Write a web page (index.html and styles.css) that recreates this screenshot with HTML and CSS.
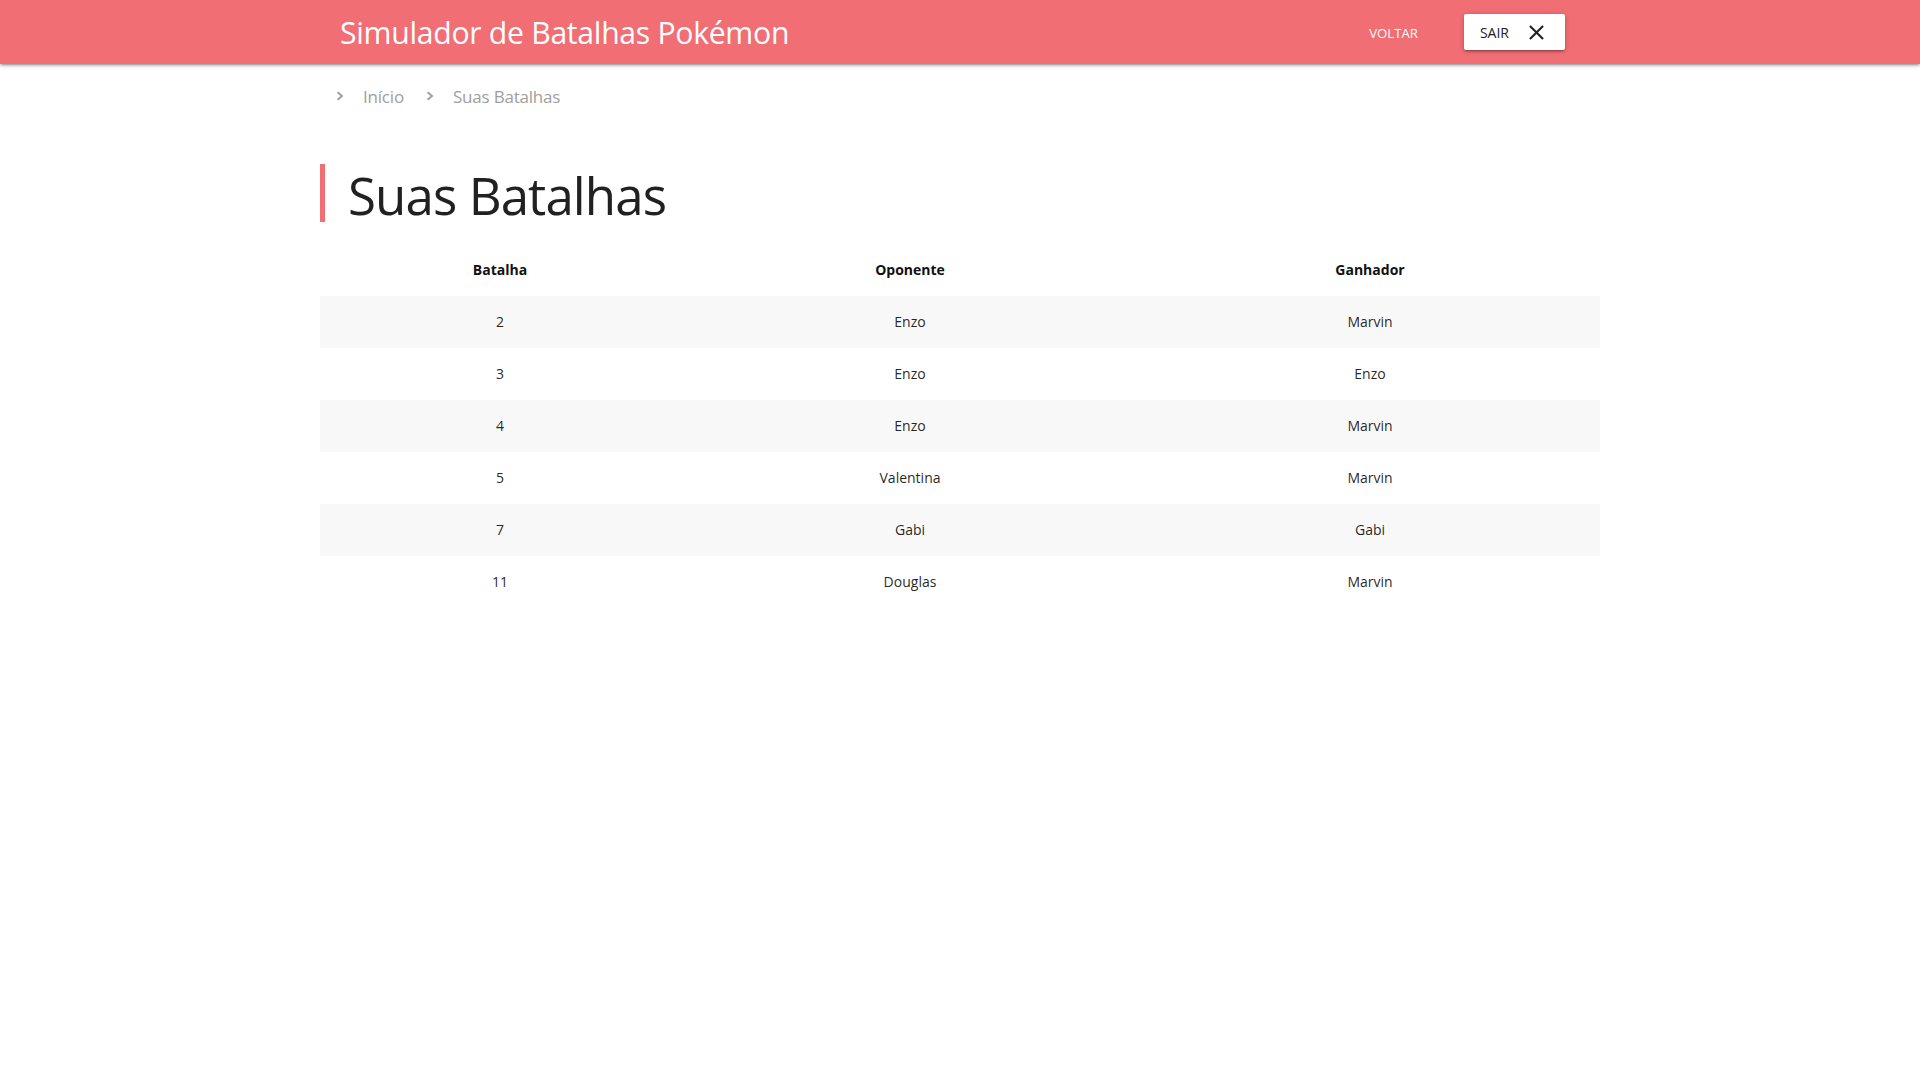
FILE: index.html
```html
<!DOCTYPE html>
<html lang="pt-BR">
<head>
<meta charset="utf-8">
<title>Suas Batalhas</title>
<link rel="stylesheet" href="styles.css">
</head>
<body>
<nav class="topbar">
  <div class="topbar-inner">
    <a class="brand" href="#">Simulador de Batalhas Pokémon</a>
    <ul class="nav-links">
      <li><a class="nav-link" href="#">VOLTAR</a></li>
      <li><a class="btn-sair" href="#">SAIR<svg class="close-icon" viewBox="0 0 24 24" width="25" height="25"><path d="M19 6.41L17.59 5 12 10.59 6.41 5 5 6.41 10.59 12 5 17.59 6.41 19 12 13.41 17.59 19 19 17.59 13.41 12z" fill="#212121"/></svg></a></li>
    </ul>
  </div>
</nav>
<main class="container">
  <div class="breadcrumbs">
    <span class="crumb"><svg class="chev" viewBox="0 0 8 10" width="8" height="10"><polyline points="1.6,1.3 5.9,5 1.6,8.7" fill="none" stroke="#9ea1a8" stroke-width="2.1"/></svg><a href="#" class="crumb-text">Início</a></span>
    <span class="crumb"><svg class="chev" viewBox="0 0 8 10" width="8" height="10"><polyline points="1.6,1.3 5.9,5 1.6,8.7" fill="none" stroke="#9ea1a8" stroke-width="2.1"/></svg><span class="crumb-text">Suas Batalhas</span></span>
  </div>
  <h1 class="page-title">Suas Batalhas</h1>
  <table class="battles">
    <colgroup>
      <col class="col-a"><col class="col-b"><col class="col-c">
    </colgroup>
    <thead>
      <tr><th>Batalha</th><th>Oponente</th><th>Ganhador</th></tr>
    </thead>
    <tbody>
      <tr><td>2</td><td>Enzo</td><td>Marvin</td></tr>
      <tr><td>3</td><td>Enzo</td><td>Enzo</td></tr>
      <tr><td>4</td><td>Enzo</td><td>Marvin</td></tr>
      <tr><td>5</td><td>Valentina</td><td>Marvin</td></tr>
      <tr><td>7</td><td>Gabi</td><td>Gabi</td></tr>
      <tr><td>11</td><td>Douglas</td><td>Marvin</td></tr>
    </tbody>
  </table>
</main>
</body>
</html>
```

FILE: styles.css
```css
html, body {
  margin: 0;
  padding: 0;
}
body {
  font-family: "Open Sans", "Noto Sans", sans-serif;
  color: rgba(0, 0, 0, 0.87);
  background: #ffffff;
}
a {
  text-decoration: none;
}
.topbar {
  height: 64px;
  background: #f06e74;
  box-shadow: 0 2px 2px 0 rgba(0,0,0,.14), 0 3px 1px -2px rgba(0,0,0,.12), 0 1px 5px 0 rgba(0,0,0,.2);
}
.topbar-inner {
  width: 1280px;
  margin: 0 auto;
  height: 64px;
  display: flex;
  align-items: center;
  justify-content: space-between;
}
.brand {
  color: #ffffff;
  font-size: 30.2px;
  line-height: 64px;
  padding: 2px 0 0 20px;
  letter-spacing: -0.3px;
}
.nav-links {
  list-style: none;
  margin: 0;
  padding: 0 35px 0 0;
  display: flex;
  align-items: center;
  gap: 31px;
}
.nav-link {
  color: #ffffff;
  font-size: 13.2px;
  padding: 2px 15px 0 15px;
  line-height: 62px;
  display: block;
}
.btn-sair {
  display: flex;
  align-items: center;
  height: 36px;
  padding: 0 16px;
  background: #ffffff;
  color: #212121;
  font-size: 14px;
  border-radius: 2px;
  box-shadow: 0 2px 2px 0 rgba(0,0,0,.14), 0 3px 1px -2px rgba(0,0,0,.12), 0 1px 5px 0 rgba(0,0,0,.2);
}
.close-icon {
  margin-left: 15px;
  display: block;
}
.container {
  width: 1280px;
  margin: 0 auto;
}
.breadcrumbs {
  display: flex;
  align-items: center;
  height: 64px;
  padding-left: 16px;
}
.crumb {
  display: flex;
  align-items: center;
}
.crumb + .crumb {
  margin-left: 22px;
}
.chev {
  display: block;
  margin-right: 19px;
}
.crumb-text {
  color: #9e9e9e;
  font-size: 17px;
  letter-spacing: -0.2px;
}
.page-title {
  margin: 36px 0 22px 0;
  border-left: 5px solid #f06e74;
  padding: 4px 0 0 23px;
  font-size: 51px;
  font-weight: 400;
  line-height: 54px;
  letter-spacing: -0.9px;
  color: #212121;
}
.battles {
  width: 100%;
  border-collapse: collapse;
  font-size: 14px;
}
.col-a { width: 28.125%; }
.col-b { width: 35.9375%; }
.col-c { width: 35.9375%; }
.battles th,
.battles td {
  text-align: center;
  padding: 15px 5px;
  line-height: 22px;
}
.battles th {
  font-weight: 700;
  color: #111111;
}
.battles tbody tr:nth-child(odd) {
  background: #f8f8f8;
}
```
